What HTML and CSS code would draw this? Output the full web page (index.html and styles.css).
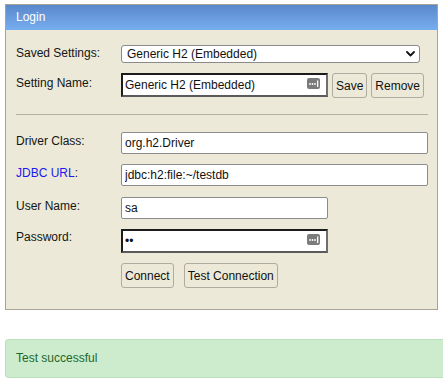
FILE: index.html
```html
<!DOCTYPE html>
<html>
<head>
<meta charset="utf-8">
<title>H2 Console Login</title>
<link rel="stylesheet" href="styles.css">
</head>
<body>
<div class="login">
  <div class="login-head">Login</div>
  <div class="login-body">
    <div class="lbl lbl-first">Saved Settings:</div>
    <div class="ctl">
      <div class="select-wrap">
        <select class="select"><option>Generic H2 (Embedded)</option></select>
        <svg class="chev" width="9" height="6" viewBox="0 0 9 6"><path d="M1 1 L4.5 4.5 L8 1" fill="none" stroke="#111" stroke-width="1.8" stroke-linecap="round" stroke-linejoin="round"/></svg>
      </div>
    </div>

    <div class="lbl lbl-name">Setting Name:</div>
    <div class="ctl ctl-row">
      <div class="field field-focus">
        <input class="input" type="text" value="Generic H2 (Embedded)">
        <svg class="autofill" width="13" height="11" viewBox="0 0 13 11"><rect x="0" y="0" width="13" height="11" rx="2" fill="#7b7b7b"/><circle cx="3" cy="6" r="0.9" fill="#fff"/><circle cx="5.5" cy="6" r="0.9" fill="#fff"/><circle cx="8" cy="6" r="0.9" fill="#fff"/><rect x="10" y="2.5" width="1.3" height="6.5" fill="#fff"/></svg>
      </div>
      <button class="btn">Save</button>
      <button class="btn">Remove</button>
    </div>

    <div class="sep"></div>

    <div class="lbl">Driver Class:</div>
    <div class="ctl"><input class="input input-wide" type="text" value="org.h2.Driver"></div>

    <div class="lbl"><a class="link" href="#">JDBC URL</a>:</div>
    <div class="ctl"><input class="input input-wide" type="text" value="jdbc:h2:file:~/testdb"></div>

    <div class="lbl lbl-user">User Name:</div>
    <div class="ctl ctl-user"><input class="input input-short" type="text" value="sa"></div>

    <div class="lbl lbl-pass">Password:</div>
    <div class="ctl">
      <div class="field field-focus">
        <input class="input" type="password" value="sa">
        <svg class="autofill" width="13" height="11" viewBox="0 0 13 11"><rect x="0" y="0" width="13" height="11" rx="2" fill="#7b7b7b"/><circle cx="3" cy="6" r="0.9" fill="#fff"/><circle cx="5.5" cy="6" r="0.9" fill="#fff"/><circle cx="8" cy="6" r="0.9" fill="#fff"/><rect x="10" y="2.5" width="1.3" height="6.5" fill="#fff"/></svg>
      </div>
    </div>

    <div class="lbl"></div>
    <div class="ctl ctl-actions">
      <button class="btn">Connect</button>
      <button class="btn">Test Connection</button>
    </div>
  </div>
</div>

<div class="alert">Test successful</div>
</body>
</html>
```

FILE: styles.css
```css
html {
  overflow: hidden;
}

body {
  margin: 4px 0 0 5px;
  font-family: "Liberation Sans", Arial, sans-serif;
  font-size: 12px;
  line-height: 14px;
  color: #111;
  background: #fff;
}

.login {
  width: 433px;
  box-sizing: border-box;
  border: 1px solid #a6a398;
  background: #ece9d8;
}

.login-head {
  height: 25px;
  box-sizing: border-box;
  padding: 5px 10px 0;
  color: #fff;
  background: linear-gradient(to bottom, #5a87cb 0%, #6a9ddf 55%, #76aef0 100%);
}

.login-body {
  display: grid;
  grid-template-columns: 105px 307px;
  row-gap: 10px;
  padding: 15px 8px 21px 10px;
}

.lbl {
  padding-top: 2px;
  color: #151515;
}

.lbl-first {
  padding-top: 1px;
}

.lbl-name {
  padding-top: 3px;
}

.lbl-user,
.ctl-user {
  margin-top: 1px;
}

.lbl-pass {
  padding-top: 1px;
}

.link {
  color: #1a1aee;
  text-decoration: none;
}

.ctl {
  display: flex;
  align-items: flex-start;
}

.ctl-row {
  gap: 4px;
}

.ctl-actions {
  gap: 10px;
}

.select-wrap {
  position: relative;
  width: 299px;
  height: 18px;
}

.select {
  appearance: none;
  -webkit-appearance: none;
  width: 100%;
  height: 18px;
  box-sizing: border-box;
  margin: 0;
  padding: 0 0 0 5px;
  border: 1px solid #8a8a8a;
  border-radius: 3px;
  background: #fff;
  font: inherit;
  line-height: 16px;
  color: #111;
}

.chev {
  position: absolute;
  right: 5px;
  top: 6px;
}

.input {
  box-sizing: border-box;
  margin: 0;
  height: 22px;
  padding: 0 3px;
  border: 1px solid #8c8c8c;
  border-radius: 2px;
  background: #fff;
  font: inherit;
  color: #111;
  outline: none;
}

.input-wide {
  width: 307px;
}

.input-short {
  width: 207px;
}

.field {
  position: relative;
}

.field-focus .input {
  width: 207px;
  height: 24px;
  border: 2px solid;
  border-color: #1c1c1c #6f6f6f #5a5a5a #1c1c1c;
  border-radius: 0;
  padding: 0 2px;
}

.autofill {
  position: absolute;
  right: 8px;
  top: 5px;
}

.btn {
  height: 25px;
  box-sizing: border-box;
  margin: 0;
  padding: 0 3px;
  border: 1px solid #aeaba0;
  border-radius: 3px;
  background: #ece9d8;
  font: inherit;
  color: #111;
}

.sep {
  grid-column: 1 / -1;
  height: 0;
  margin: 6px 0 7px;
  border-top: 1px solid #b3b0a3;
}

.alert {
  box-sizing: border-box;
  margin-top: 29px;
  padding: 11px 10px 12px;
  border: 1px solid #b9e0bb;
  border-right: none;
  border-radius: 4px 0 0 4px;
  background: #cdeccd;
  color: #22672a;
}
```
